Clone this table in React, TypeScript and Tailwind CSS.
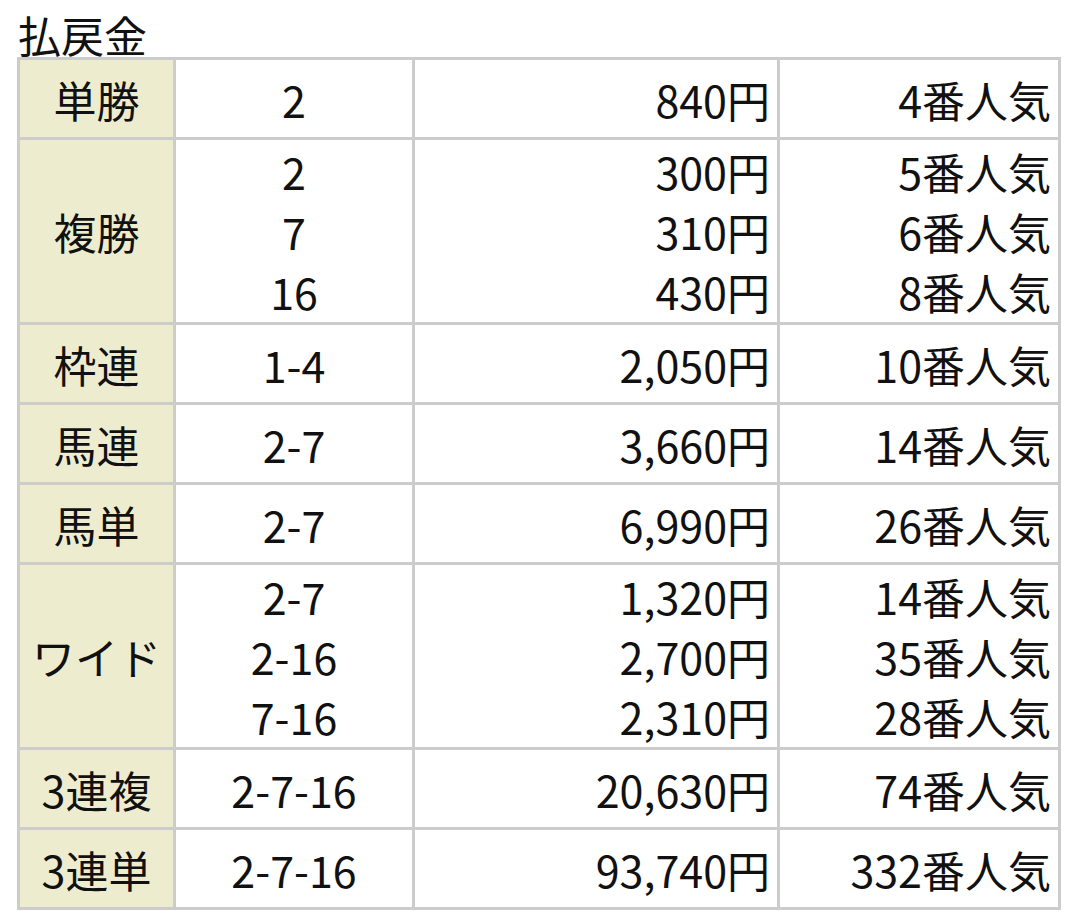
type Payout = {
  label: string;
  rows: { combo: string; amount: string; rank: string }[];
};

const PAYOUTS: Payout[] = [
  { label: "単勝", rows: [{ combo: "2", amount: "840円", rank: "4番人気" }] },
  {
    label: "複勝",
    rows: [
      { combo: "2", amount: "300円", rank: "5番人気" },
      { combo: "7", amount: "310円", rank: "6番人気" },
      { combo: "16", amount: "430円", rank: "8番人気" },
    ],
  },
  { label: "枠連", rows: [{ combo: "1-4", amount: "2,050円", rank: "10番人気" }] },
  { label: "馬連", rows: [{ combo: "2-7", amount: "3,660円", rank: "14番人気" }] },
  { label: "馬単", rows: [{ combo: "2-7", amount: "6,990円", rank: "26番人気" }] },
  {
    label: "ワイド",
    rows: [
      { combo: "2-7", amount: "1,320円", rank: "14番人気" },
      { combo: "2-16", amount: "2,700円", rank: "35番人気" },
      { combo: "7-16", amount: "2,310円", rank: "28番人気" },
    ],
  },
  { label: "3連複", rows: [{ combo: "2-7-16", amount: "20,630円", rank: "74番人気" }] },
  { label: "3連単", rows: [{ combo: "2-7-16", amount: "93,740円", rank: "332番人気" }] },
];

function PayoutRow({ payout }: { payout: Payout }) {
  const multi = payout.rows.length > 1;
  const height = multi ? "h-[185px]" : "h-[80px]";
  const cell = `flex flex-col justify-center border-r-[3px] border-b-[3px] border-[#cccccc] ${height}`;

  return (
    <div className="flex">
      <div className={`${cell} w-[156px] items-center bg-[#eeeccf]`}>
        <span className="leading-[60px]">{payout.label}</span>
      </div>
      <div className={`${cell} w-[239px] items-center`}>
        {payout.rows.map((r, i) => (
          <span key={i} className="leading-[60px]">{r.combo}</span>
        ))}
      </div>
      <div className={`${cell} w-[365px] items-end pr-[7px]`}>
        {payout.rows.map((r, i) => (
          <span key={i} className="leading-[60px]">{r.amount}</span>
        ))}
      </div>
      <div className={`${cell} w-[281px] items-end pr-[7px]`}>
        {payout.rows.map((r, i) => (
          <span key={i} className="leading-[60px]">{r.rank}</span>
        ))}
      </div>
    </div>
  );
}

export default function App() {
  return (
    <div
      className="min-h-[921px] w-[1080px] bg-white pl-[17px] text-[43px] text-[#111111]"
      style={{ fontFamily: '"Noto Sans CJK JP", "Noto Sans", sans-serif' }}
    >
      <div className="h-[57px] pt-[13px] pl-[1px] leading-[43px]">払戻金</div>
      <div className="inline-flex flex-col border-t-[3px] border-l-[3px] border-[#cccccc]">
        {PAYOUTS.map((p) => (
          <PayoutRow key={p.label} payout={p} />
        ))}
      </div>
    </div>
  );
}
